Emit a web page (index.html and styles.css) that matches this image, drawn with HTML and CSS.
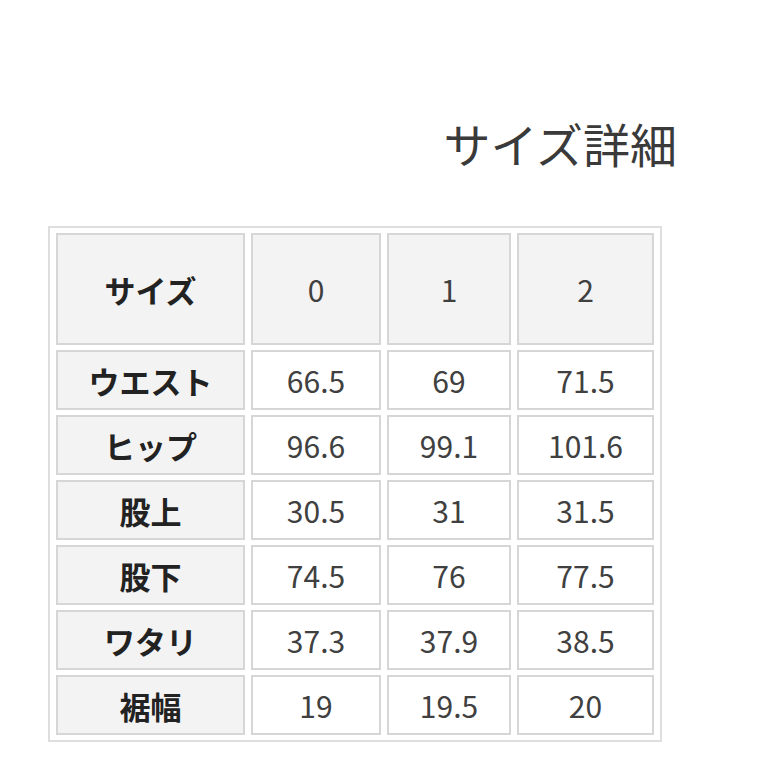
FILE: index.html
```html
<!DOCTYPE html>
<html lang="ja">
<head>
<meta charset="utf-8">
<link rel="stylesheet" href="styles.css">
</head>
<body>
<div class="page">
  <h1 class="title">サイズ詳細</h1>
  <table class="size-table">
    <colgroup>
      <col class="c-label">
      <col class="c-0">
      <col class="c-1">
      <col class="c-2">
    </colgroup>
    <tr class="head">
      <th>サイズ</th><td>0</td><td>1</td><td>2</td>
    </tr>
    <tr><th>ウエスト</th><td>66.5</td><td>69</td><td>71.5</td></tr>
    <tr><th>ヒップ</th><td>96.6</td><td>99.1</td><td>101.6</td></tr>
    <tr><th>股上</th><td>30.5</td><td>31</td><td>31.5</td></tr>
    <tr><th>股下</th><td>74.5</td><td>76</td><td>77.5</td></tr>
    <tr><th>ワタリ</th><td>37.3</td><td>37.9</td><td>38.5</td></tr>
    <tr><th>裾幅</th><td>19</td><td>19.5</td><td>20</td></tr>
  </table>
</div>
</body>
</html>
```
FILE: styles.css
```css
html, body {
  margin: 0;
  padding: 0;
  background: #ffffff;
}
.page {
  width: 766px;
  height: 766px;
  padding-top: 112px;
  box-sizing: border-box;
  font-family: "Noto Sans CJK JP", "Noto Sans", sans-serif;
  color: #333333;
}
.title {
  margin: 0;
  padding-right: 89px;
  text-align: right;
  font-size: 47px;
  font-weight: 400;
  line-height: 62px;
  color: #3a3a3a;
}
.size-table {
  margin: 52px 0 0 48px;
  border: 2px solid #dedede;
  border-spacing: 6px 5px;
  table-layout: fixed;
}
.c-label { width: 189px; }
.c-0 { width: 130px; }
.c-1 { width: 124px; }
.c-2 { width: 137px; }
.size-table th,
.size-table td {
  box-sizing: border-box;
  height: 60px;
  padding: 0;
  border: 2px solid #d6d6d6;
  text-align: center;
  vertical-align: middle;
  line-height: 1;
}
.size-table th {
  background: #f3f3f3;
  font-size: 31px;
  font-weight: 700;
  color: #222222;
}
.size-table td {
  background: #ffffff;
  font-size: 30px;
  font-weight: 400;
  color: #404040;
}
.size-table .head th,
.size-table .head td {
  height: 112px;
  background: #f3f3f3;
}
```
